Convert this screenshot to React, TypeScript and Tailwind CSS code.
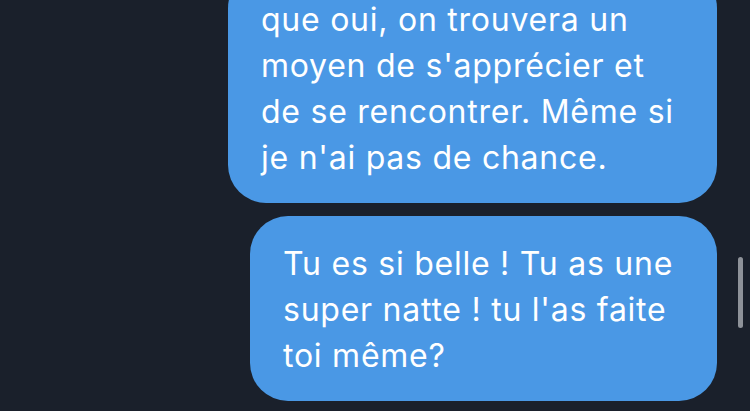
import React from 'react';

const bubbles: { lines: string[]; width: string; top: string }[] = [
  {
    lines: ["que oui, on trouvera un", "moyen de s'apprécier et", 'de se rencontrer. Même si', "je n'ai pas de chance."],
    width: 'w-[489px]',
    top: 'mt-[-30px] pt-[27px]',
  },
  {
    lines: ['Tu es si belle ! Tu as une', "super natte ! tu l'as faite", 'toi même?'],
    width: 'w-[467px]',
    top: 'mt-[13px] pt-[25px]',
  },
];

export default function App() {
  return (
    <div className="relative w-[750px] h-[411px] overflow-hidden bg-[#1a202b] font-['Inter','Liberation_Sans',sans-serif]">
      <div className="flex flex-col items-end pr-[33px]">
        {bubbles.map((b, i) => (
          <div
            key={i}
            className={`${b.width} ${b.top} pb-[22px] pl-[33px] rounded-[38px] bg-[#4a98e5] text-white text-[32px] leading-[46px] tracking-[0.75px]`}
          >
            {b.lines.map((l) => (
              <span key={l} className="block whitespace-nowrap">{l}</span>
            ))}
          </div>
        ))}
      </div>
      {/* scroll indicator */}
      <div className="absolute left-[738px] top-[257px] w-[5px] h-[71px] rounded-full bg-[#8e9299]" />
    </div>
  );
}
